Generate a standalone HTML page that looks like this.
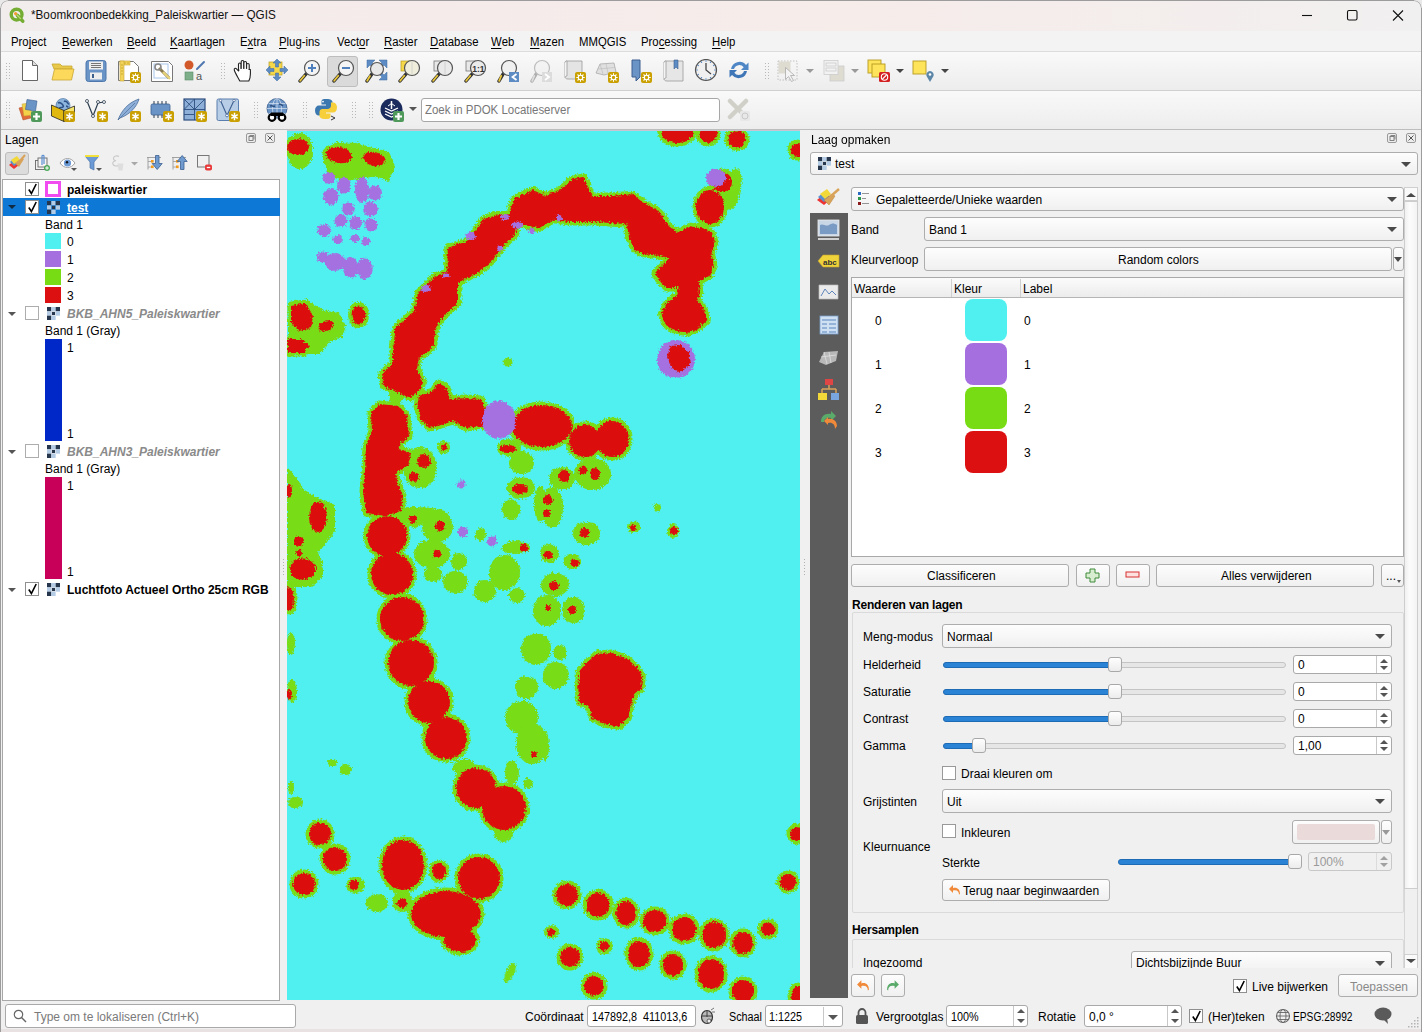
<!DOCTYPE html>
<html><head><meta charset="utf-8">
<style>
*{box-sizing:border-box;margin:0;padding:0}
html,body{width:1422px;height:1032px;overflow:hidden;background:#f0f0f0;font-family:"Liberation Sans",sans-serif;font-size:12px;color:#000}
.a{position:absolute}
.t{position:absolute;white-space:nowrap;line-height:14px;font-size:12px}
u{text-decoration:none;border-bottom:1px solid currentColor;line-height:11px;display:inline-block}
.btn{position:absolute;background:linear-gradient(#fdfdfd,#f0f0f0);border:1px solid #adadad;border-radius:3px}
.cmb{position:absolute;background:linear-gradient(#fdfdfd,#f0f0f0);border:1px solid #adadad;border-radius:3px}
.arr{position:absolute;width:0;height:0;border-left:5px solid transparent;border-right:5px solid transparent;border-top:5px solid #4a4a4a}
.edit{position:absolute;background:#fff;border:1px solid #a9a9a9;border-radius:3px}
.cb{position:absolute;width:14px;height:14px;background:#fff;border:1px solid #8f8f8f}
.chk{position:absolute;left:2px;top:0px;width:9px;height:12px}
.groove{position:absolute;height:6px;border-radius:3px;background:#e6e6e6;border:1px solid #c4c4c4}
.fill{position:absolute;height:6px;border-radius:3px;background:#2b83d6;border:1px solid #1d6bb5}
.hdl{position:absolute;width:14px;height:15px;border-radius:3px;background:linear-gradient(#fefefe,#ececec);border:1px solid #a8a8a8}
.spin{position:absolute;background:#fff;border:1px solid #a9a9a9;border-radius:3px}
.sp{position:absolute;right:0;top:0;width:15px;height:100%;border-left:1px solid #c8c8c8}
.sp:before{content:"";position:absolute;left:3px;top:3px;border-left:4.5px solid transparent;border-right:4.5px solid transparent;border-bottom:4px solid #555}
.sp:after{content:"";position:absolute;left:3px;bottom:3px;border-left:4.5px solid transparent;border-right:4.5px solid transparent;border-top:4px solid #555}
</style></head><body>
<!-- window chrome -->
<div class="a" style="left:0;top:0;width:1422px;height:31px;background:linear-gradient(90deg,#f2eded 0%,#f5ebea 30%,#f6ecea 60%,#f3eeed 85%,#f1f0f0 100%)"></div>
<div class="a" style="left:0;top:31px;width:1422px;height:20px;background:#f3f3f3"></div>
<div class="a" style="left:0;top:51px;width:1422px;height:40px;background:linear-gradient(#f9f9f9,#ededed);border-top:1px solid #dcdcdc;border-bottom:1px solid #d0d0d0"></div>
<div class="a" style="left:0;top:91px;width:1422px;height:39px;background:linear-gradient(#f9f9f9,#ededed);border-bottom:1px solid #bdbdbd"></div>
<!-- title -->
<svg class="a" style="left:9px;top:7px" width="17" height="16" viewBox="0 0 17 16"><circle cx="7.6" cy="7.6" r="5.4" fill="none" stroke="#74ad32" stroke-width="3.4"/><path d="M8.5 8.5l5.2 5.6" stroke="#74ad32" stroke-width="3.6" stroke-linecap="round"/><path d="M7 7l4.5 4.5" stroke="#b8d86a" stroke-width="1.4" stroke-linecap="round"/><circle cx="6.6" cy="6.6" r="1.6" fill="#f39a2e"/></svg>
<div class="t" style="left:31px;top:8px;font-size:12.6px;color:#111;transform:scaleX(0.93);transform-origin:0 0">*Boomkroonbedekking_Paleiskwartier — QGIS</div>
<svg class="a" style="left:1300px;top:9px" width="110" height="14" viewBox="0 0 110 14"><path d="M2 6.5h10" stroke="#111" stroke-width="1.1"/><rect x="47.5" y="1.5" width="9.5" height="9.5" rx="1.5" fill="none" stroke="#111" stroke-width="1.1"/><path d="M93 1.5l10 10M103 1.5l-10 10" stroke="#111" stroke-width="1.1"/></svg>
<!-- menu -->
<div class="t" style="left:11px;top:35px;transform:scaleX(0.945);transform-origin:0 0">Pro<u>j</u>ect</div>
<div class="t" style="left:62px;top:35px;transform:scaleX(0.945);transform-origin:0 0"><u>B</u>ewerken</div>
<div class="t" style="left:127px;top:35px;transform:scaleX(0.945);transform-origin:0 0"><u>B</u>eeld</div>
<div class="t" style="left:170px;top:35px;transform:scaleX(0.945);transform-origin:0 0"><u>K</u>aartlagen</div>
<div class="t" style="left:240px;top:35px;transform:scaleX(0.945);transform-origin:0 0">E<u>x</u>tra</div>
<div class="t" style="left:279px;top:35px;transform:scaleX(0.945);transform-origin:0 0"><u>P</u>lug-ins</div>
<div class="t" style="left:337px;top:35px;transform:scaleX(0.945);transform-origin:0 0">Vect<u>o</u>r</div>
<div class="t" style="left:384px;top:35px;transform:scaleX(0.945);transform-origin:0 0"><u>R</u>aster</div>
<div class="t" style="left:430px;top:35px;transform:scaleX(0.945);transform-origin:0 0"><u>D</u>atabase</div>
<div class="t" style="left:491px;top:35px;transform:scaleX(0.945);transform-origin:0 0"><u>W</u>eb</div>
<div class="t" style="left:530px;top:35px;transform:scaleX(0.945);transform-origin:0 0"><u>M</u>azen</div>
<div class="t" style="left:579px;top:35px;transform:scaleX(0.945);transform-origin:0 0">MMQGIS</div>
<div class="t" style="left:641px;top:35px;transform:scaleX(0.945);transform-origin:0 0">Pro<u>c</u>essing</div>
<div class="t" style="left:712px;top:35px;transform:scaleX(0.945);transform-origin:0 0"><u>H</u>elp</div>
<div class="a" style="left:327px;top:56px;width:31px;height:31px;background:#dadada;border:1px solid #bdbdbd;border-radius:3px"></div>
<svg class="a" style="left:18px;top:59px" width="24" height="24" viewBox="0 0 24 24"><path d="M4.5 1.5h10l5 5v15h-15z" fill="#fff" stroke="#666" stroke-width="1"/><path d="M14.5 1.5v5h5" fill="#ddd" stroke="#666" stroke-width="1"/></svg>
<svg class="a" style="left:51px;top:59px" width="24" height="24" viewBox="0 0 24 24"><path d="M1 5h8l2 2h10v3H3z" fill="#e9c94a" stroke="#c8a830" stroke-width="0.8"/><path d="M3.5 10h19.5l-2.5 11H1z" fill="#fcd95a" stroke="#c9a634" stroke-width="0.8"/></svg>
<svg class="a" style="left:84px;top:59px" width="24" height="24" viewBox="0 0 24 24"><rect x="2" y="1.5" width="20" height="21" rx="2.5" fill="#6a93c6" stroke="#4e78ad"/><rect x="5" y="2.5" width="14" height="8" fill="#eee"/><path d="M7 4.5h10M7 6.5h10M7 8.5h10" stroke="#555" stroke-width="0.8"/><rect x="6" y="13.5" width="12" height="7" fill="#eee"/><rect x="8" y="15" width="2" height="4" fill="#3c5f8c"/></svg>
<svg class="a" style="left:117px;top:59px" width="24" height="24" viewBox="0 0 24 24"><path d="M1.5 2.5h15l5 5v14h-20z" fill="#fff" stroke="#777"/><rect x="3" y="2" width="10" height="4" fill="#f3d45a" stroke="#c9a634" stroke-width="0.6"/><rect x="3" y="2" width="4" height="20" fill="#f3d45a" stroke="#c9a634" stroke-width="0.6"/><path d="M4 6h2M4 9h2M4 12h2M4 15h2M8 3v2M11 3v2" stroke="#b08e20" stroke-width="0.6"/><rect x="13" y="13" width="11" height="11" rx="2" fill="#c9a000"/><path d="M18.5 14.3v2M18.5 20.7v2M14.3 18.5h2M20.7 18.5h2M15.5 15.5l1.4 1.4M20.1 20.1l1.4 1.4M21.5 15.5l-1.4 1.4M16.9 20.1l-1.4 1.4" stroke="#fff" stroke-width="1.1"/><circle cx="18.5" cy="18.5" r="2.2" fill="none" stroke="#fff" stroke-width="1.1"/></svg>
<svg class="a" style="left:150px;top:59px" width="24" height="24" viewBox="0 0 24 24"><path d="M1.5 2.5h17l4 4v16h-21z" fill="#fff" stroke="#777"/><rect x="4" y="5" width="14" height="14" fill="none" stroke="#a8c4ea" stroke-width="1"/><path d="M9 9l10 10" stroke="#8a7a50" stroke-width="3"/><path d="M13 13l7 7" stroke="#e6d27a" stroke-width="2.4"/><circle cx="8" cy="8" r="3" fill="none" stroke="#888" stroke-width="1.6"/></svg>
<svg class="a" style="left:183px;top:59px" width="24" height="24" viewBox="0 0 24 24"><circle cx="6" cy="6" r="4.5" fill="#d2592a"/><path d="M14 10L21 3" stroke="#4f78b0" stroke-width="2" stroke-linecap="round"/><rect x="2" y="13" width="8" height="8" fill="#7db08a" stroke="#5a8a66" stroke-width="0.6"/><text x="13" y="21" font-family="Liberation Sans" font-size="11" fill="#555">a</text></svg>
<div class="a" style="left:220px;top:62px;width:5px;height:18px;background-image:radial-gradient(circle,#b8b8b8 0.8px,transparent 1px);background-size:3px 3px"></div>
<svg class="a" style="left:233px;top:59px" width="24" height="24" viewBox="0 0 24 24"><g fill="#fff" stroke="#222" stroke-width="1.1"><rect x="5.5" y="4" width="2.6" height="11" rx="1.3"/><rect x="8.2" y="1.5" width="2.6" height="12" rx="1.3"/><rect x="10.9" y="2.5" width="2.6" height="12" rx="1.3"/><rect x="13.6" y="4.5" width="2.6" height="11" rx="1.3"/></g><path d="M5.5 12l-2-2.2c-1-1-2.6-.3-2.2 1.2c.8 3 3.5 7 5.5 11h9c1-2 1.6-4 1.6-7V10.5h-11z" fill="#fff" stroke="#222" stroke-width="1.1" stroke-linejoin="round"/><path d="M6.2 10.6h9.3" stroke="#fff" stroke-width="1.4"/></svg>
<svg class="a" style="left:266px;top:59px" width="24" height="24" viewBox="0 0 24 24"><rect x="3" y="3" width="13" height="13" fill="#f5d94a" stroke="#b59a20" stroke-width="0.7"/><path d="M11 0l4 4h-2.5v4h-3V4H7z M11 22l4-4h-2.5v-4h-3v4H7z M0 11l4-4v2.5h4v3H4V15z M22 11l-4-4v2.5h-4v3h4V15z" fill="#5d8cc4" stroke="#3d6aa0" stroke-width="0.5"/></svg>
<svg class="a" style="left:297px;top:59px" width="24" height="24" viewBox="0 0 24 24"><path d="M9.25 14.75 L3 22" stroke="#333" stroke-width="3.4" stroke-linecap="round"/><path d="M7.25 16.75 L3.2 21.8" stroke="#e8c63a" stroke-width="1.8" stroke-linecap="round"/><circle cx="15" cy="9" r="7.5" fill="#f4f4f4" stroke="#555" stroke-width="1.2"/><path d="M15 5v8M11 9h8" stroke="#4f80bc" stroke-width="2"/></svg>
<svg class="a" style="left:331px;top:59px" width="24" height="24" viewBox="0 0 24 24"><path d="M9.25 14.75 L3 22" stroke="#333" stroke-width="3.4" stroke-linecap="round"/><path d="M7.25 16.75 L3.2 21.8" stroke="#e8c63a" stroke-width="1.8" stroke-linecap="round"/><circle cx="15" cy="9" r="7.5" fill="#f4f4f4" stroke="#555" stroke-width="1.2"/><path d="M11 9h8" stroke="#4f80bc" stroke-width="2"/></svg>
<svg class="a" style="left:364px;top:59px" width="24" height="24" viewBox="0 0 24 24"><path d="M3 1h8l-3 3 3 3-2 2-3-3-3 3z M23 1h-8l3 3-3 3 2 2 3-3 3 3z M23 21h-8l3-3-3-3 2-2 3 3 3-3z" fill="#5d8cc4" stroke="#3d6aa0" stroke-width="0.5"/><path d="M7.949999999999999 15.05 L3 22" stroke="#333" stroke-width="3.4" stroke-linecap="round"/><path d="M5.949999999999999 17.05 L3.2 21.8" stroke="#e8c63a" stroke-width="1.8" stroke-linecap="round"/><circle cx="13" cy="10" r="6.5" fill="#e8e8e8" stroke="#555" stroke-width="1.2"/></svg>
<svg class="a" style="left:397px;top:59px" width="24" height="24" viewBox="0 0 24 24"><rect x="4" y="2" width="10" height="10" fill="#f5d94a" stroke="#b59a20" stroke-width="0.7"/><path d="M9.25 14.75 L3 22" stroke="#333" stroke-width="3.4" stroke-linecap="round"/><path d="M7.25 16.75 L3.2 21.8" stroke="#e8c63a" stroke-width="1.8" stroke-linecap="round"/><circle cx="15" cy="9" r="7.5" fill="#efeedd" stroke="#555" stroke-width="1.2"/><path d="M15 2v14" stroke="#ccc" stroke-width="0.8"/></svg>
<svg class="a" style="left:430px;top:59px" width="24" height="24" viewBox="0 0 24 24"><rect x="4" y="2" width="10" height="10" fill="#e8e8e8" stroke="#777" stroke-width="0.8"/><path d="M9.25 14.75 L3 22" stroke="#333" stroke-width="3.4" stroke-linecap="round"/><path d="M7.25 16.75 L3.2 21.8" stroke="#e8c63a" stroke-width="1.8" stroke-linecap="round"/><circle cx="15" cy="9" r="7.5" fill="#eaeaea" stroke="#555" stroke-width="1.2"/><path d="M15 2v14" stroke="#ccc" stroke-width="0.8"/></svg>
<svg class="a" style="left:463px;top:59px" width="24" height="24" viewBox="0 0 24 24"><rect x="3" y="2" width="10" height="10" fill="#e8e8e8" stroke="#777" stroke-width="0.8"/><path d="M9.25 14.75 L3 22" stroke="#333" stroke-width="3.4" stroke-linecap="round"/><path d="M7.25 16.75 L3.2 21.8" stroke="#e8c63a" stroke-width="1.8" stroke-linecap="round"/><circle cx="15" cy="9" r="7.5" fill="#eaeaea" stroke="#555" stroke-width="1.2"/><text x="9.2" y="12.5" font-family="Liberation Sans" font-size="8.5" font-weight="700" fill="#333">1:1</text></svg>
<svg class="a" style="left:496px;top:59px" width="24" height="24" viewBox="0 0 24 24"><path d="M7.25 14.75 L3 22" stroke="#333" stroke-width="3.4" stroke-linecap="round"/><path d="M5.25 16.75 L3.2 21.8" stroke="#e8c63a" stroke-width="1.8" stroke-linecap="round"/><circle cx="13" cy="9" r="7.5" fill="#f0f0f0" stroke="#555" stroke-width="1.2"/><rect x="13" y="13" width="10" height="10" fill="#5d8cc4"/><path d="M20.5 15l-4 3 4 3" stroke="#fff" stroke-width="1.8" fill="none"/></svg>
<svg class="a" style="left:529px;top:59px" width="24" height="24" viewBox="0 0 24 24"><g opacity="0.35"><path d="M7.25 14.75 L3 22" stroke="#333" stroke-width="3.4" stroke-linecap="round"/><path d="M5.25 16.75 L3.2 21.8" stroke="#bbb" stroke-width="1.8" stroke-linecap="round"/><circle cx="13" cy="9" r="7.5" fill="#f0f0f0" stroke="#555" stroke-width="1.2"/></g><rect x="13" y="13" width="10" height="10" fill="#dcdcdc"/><path d="M16 15l4 3-4 3" stroke="#fff" stroke-width="1.8" fill="none"/></svg>
<svg class="a" style="left:562px;top:59px" width="24" height="24" viewBox="0 0 24 24"><path d="M4 2h16v18H6c-2 0-3-1-3-2.5V3.5z" fill="#e4e4e4" stroke="#999" stroke-width="0.8"/><path d="M3 3.5c0-1 1-1.5 2-1.5v15c-1 0-2 .5-2 1.5" fill="#f4f4f4" stroke="#999" stroke-width="0.8"/><rect x="13" y="13" width="11" height="11" rx="2" fill="#c9a000"/><path d="M18.5 14.3v2M18.5 20.7v2M14.3 18.5h2M20.7 18.5h2M15.5 15.5l1.4 1.4M20.1 20.1l1.4 1.4M21.5 15.5l-1.4 1.4M16.9 20.1l-1.4 1.4" stroke="#fff" stroke-width="1.1"/><circle cx="18.5" cy="18.5" r="2.2" fill="none" stroke="#fff" stroke-width="1.1"/></svg>
<svg class="a" style="left:595px;top:59px" width="24" height="24" viewBox="0 0 24 24"><path d="M1 14l4-9 14-1 2 9-12 3z" fill="#e0e0e0" stroke="#aaa" stroke-width="0.8"/><path d="M5 5l3 10M11 4.5l2 10M3 10l17-1.5" stroke="#bbb" stroke-width="0.6"/><rect x="13" y="13" width="11" height="11" rx="2" fill="#c9a000"/><path d="M18.5 14.3v2M18.5 20.7v2M14.3 18.5h2M20.7 18.5h2M15.5 15.5l1.4 1.4M20.1 20.1l1.4 1.4M21.5 15.5l-1.4 1.4M16.9 20.1l-1.4 1.4" stroke="#fff" stroke-width="1.1"/><circle cx="18.5" cy="18.5" r="2.2" fill="none" stroke="#fff" stroke-width="1.1"/></svg>
<svg class="a" style="left:628px;top:59px" width="24" height="24" viewBox="0 0 24 24"><path d="M4 1h8v17l-4 4V18H4z" fill="#6a93c6" stroke="#3d5f8f" stroke-width="1"/><rect x="13" y="13" width="11" height="11" rx="2" fill="#c9a000"/><path d="M18.5 14.3v2M18.5 20.7v2M14.3 18.5h2M20.7 18.5h2M15.5 15.5l1.4 1.4M20.1 20.1l1.4 1.4M21.5 15.5l-1.4 1.4M16.9 20.1l-1.4 1.4" stroke="#fff" stroke-width="1.1"/><circle cx="18.5" cy="18.5" r="2.2" fill="none" stroke="#fff" stroke-width="1.1"/></svg>
<svg class="a" style="left:661px;top:59px" width="24" height="24" viewBox="0 0 24 24"><path d="M4 2h18v20H6c-2 0-3-1-3-2.5V3.5z" fill="#e6e6e6" stroke="#999" stroke-width="0.8"/><path d="M3 3.5c0-1 1-1.5 2-1.5v17c-1 0-2 .5-2 1.5" fill="#f4f4f4" stroke="#999" stroke-width="0.8"/><path d="M13 1h4v9l-2-2-2 2z" fill="#5d8cc4" stroke="#3d5f8f" stroke-width="0.6"/></svg>
<svg class="a" style="left:694px;top:59px" width="24" height="24" viewBox="0 0 24 24"><circle cx="12" cy="11" r="10.5" fill="#f0f0f0" stroke="#555" stroke-width="1.2"/><path d="M12 4v7l5 4" stroke="#444" stroke-width="1.3" fill="none"/><circle cx="21.0" cy="11.0" r="0.7" fill="#4f80bc"/><circle cx="19.8" cy="15.5" r="0.7" fill="#4f80bc"/><circle cx="16.5" cy="18.8" r="0.7" fill="#4f80bc"/><circle cx="12.0" cy="20.0" r="0.7" fill="#4f80bc"/><circle cx="7.5" cy="18.8" r="0.7" fill="#4f80bc"/><circle cx="4.2" cy="15.5" r="0.7" fill="#4f80bc"/><circle cx="3.0" cy="11.0" r="0.7" fill="#4f80bc"/><circle cx="4.2" cy="6.5" r="0.7" fill="#4f80bc"/><circle cx="7.5" cy="3.2" r="0.7" fill="#4f80bc"/><circle cx="12.0" cy="2.0" r="0.7" fill="#4f80bc"/><circle cx="16.5" cy="3.2" r="0.7" fill="#4f80bc"/><circle cx="19.8" cy="6.5" r="0.7" fill="#4f80bc"/></svg>
<svg class="a" style="left:727px;top:59px" width="24" height="24" viewBox="0 0 24 24"><path d="M4 10a8.5 8.5 0 0 1 15-4l2.5-2.5V11h-7.5l2.7-2.7A5.5 5.5 0 0 0 7 10z" fill="#4f86c6"/><path d="M20 12a8.5 8.5 0 0 1-15 4l-2.5 2.5V11h7.5l-2.7 2.7A5.5 5.5 0 0 0 17 12z" fill="#3f76b8"/></svg>
<div class="a" style="left:764px;top:62px;width:5px;height:18px;background-image:radial-gradient(circle,#b8b8b8 0.8px,transparent 1px);background-size:3px 3px"></div>
<svg class="a" style="left:776px;top:59px" width="24" height="24" viewBox="0 0 24 24"><rect x="2" y="2" width="19" height="19" fill="none" stroke="#bbb" stroke-width="0.9" stroke-dasharray="1.5 1.5"/><rect x="2.5" y="2.5" width="12" height="12" fill="#dedbd0"/><path d="M9.5 8.5l0 12 3-3 3 5 2-1-3-5 4 0z" fill="#f4f4f4" stroke="#aaa" stroke-width="0.8"/></svg>
<div class="a" style="left:806px;top:69px;width:0;height:0;border-left:4px solid transparent;border-right:4px solid transparent;border-top:4px solid #999"></div>
<svg class="a" style="left:822px;top:59px" width="24" height="24" viewBox="0 0 24 24"><rect x="8" y="7" width="14" height="15" fill="#dedbd0" stroke="#ccc" stroke-width="0.8"/><rect x="2" y="1.5" width="14" height="14" fill="#f2f2f2" stroke="#ccc" stroke-width="0.8"/><rect x="4" y="4" width="10" height="3" fill="none" stroke="#ccc" stroke-width="0.8"/><rect x="4" y="9" width="10" height="3" fill="none" stroke="#ccc" stroke-width="0.8"/></svg>
<div class="a" style="left:851px;top:69px;width:0;height:0;border-left:4px solid transparent;border-right:4px solid transparent;border-top:4px solid #999"></div>
<svg class="a" style="left:867px;top:59px" width="24" height="24" viewBox="0 0 24 24"><rect x="1" y="1" width="13" height="13" fill="#fde45a" stroke="#b59a20" stroke-width="0.9"/><rect x="5" y="5" width="13" height="13" fill="#fde45a" stroke="#b59a20" stroke-width="0.9"/><rect x="12" y="13" width="11" height="10" rx="1.5" fill="#d42020"/><circle cx="17.5" cy="18" r="3.2" fill="none" stroke="#fff" stroke-width="1.1"/><path d="M15.5 20l4-4" stroke="#fff" stroke-width="1.1"/></svg>
<div class="a" style="left:896px;top:69px;width:0;height:0;border-left:4px solid transparent;border-right:4px solid transparent;border-top:4px solid #444"></div>
<svg class="a" style="left:912px;top:59px" width="24" height="24" viewBox="0 0 24 24"><rect x="1" y="2" width="13" height="13" fill="#fde45a" stroke="#b59a20" stroke-width="0.9"/><path d="M18 23l-3.5-6a3.7 3.7 0 1 1 7 0z" fill="#5b86a8"/><circle cx="18" cy="15.5" r="1.3" fill="#fff"/></svg>
<div class="a" style="left:941px;top:69px;width:0;height:0;border-left:4px solid transparent;border-right:4px solid transparent;border-top:4px solid #444"></div>
<div class="a" style="left:5px;top:101px;width:5px;height:18px;background-image:radial-gradient(circle,#b8b8b8 0.8px,transparent 1px);background-size:3px 3px"></div>
<div class="a" style="left:5px;top:62px;width:5px;height:18px;background-image:radial-gradient(circle,#b8b8b8 0.8px,transparent 1px);background-size:3px 3px"></div>
<svg class="a" style="left:18px;top:98px" width="24" height="24" viewBox="0 0 24 24"><path d="M1 10l8-2 4 12-8 2z" fill="#e06a3a" stroke="#b04a20" stroke-width="0.5"/><path d="M4 6l8-1 2 12-8 1z" fill="#f3d24a" stroke="#c9a634" stroke-width="0.5"/><path d="M9 1.5l10 1.5-1.5 10-10-1.5z" fill="#6a93c6" stroke="#3d5f8f" stroke-width="0.6"/><rect x="13" y="13" width="11" height="11" rx="2" fill="#4f9a5a"/><path d="M18.5 15v7M15 18.5h7" stroke="#fff" stroke-width="2.2"/></svg>
<svg class="a" style="left:51px;top:98px" width="24" height="24" viewBox="0 0 24 24"><circle cx="12" cy="7.5" r="7" fill="#8db4dc" stroke="#3d6a9c" stroke-width="0.6"/><path d="M7 5c1.5-1 3 0 4 1s2 2 1 3-3 0-3.5 1M13 3c1 .5 2 0 3 1s1 2 2 2M15 8c1 0 1.5 1 2.5 1" stroke="#2d5288" stroke-width="1.6" fill="none"/><path d="M0.5 7l12.5 5.5v11L0.5 18z" fill="#e0b810" stroke="#222" stroke-width="0.8"/><path d="M13 12.5l10.5-4.5v11L13 23.5z" fill="#f6e46a" stroke="#222" stroke-width="0.8"/><rect x="13" y="13" width="11" height="11" rx="2" fill="#c9a000"/><path d="M18.5 14.8v7.4M15.3 16.6l6.4 3.8M21.7 16.6l-6.4 3.8" stroke="#fff" stroke-width="1.5"/></svg>
<svg class="a" style="left:84px;top:98px" width="24" height="24" viewBox="0 0 24 24"><path d="M3 3l6 15 5-13 6-1" stroke="#2d3e50" stroke-width="1.2" fill="none"/><circle cx="3" cy="3" r="1.5" fill="#fff" stroke="#2d3e50" stroke-width="0.8"/><circle cx="9" cy="18" r="1.5" fill="#fff" stroke="#2d3e50" stroke-width="0.8"/><circle cx="14" cy="4" r="1.5" fill="#fff" stroke="#2d3e50" stroke-width="0.8"/><circle cx="20" cy="4" r="1.5" fill="#fff" stroke="#2d3e50" stroke-width="0.8"/><rect x="13" y="13" width="11" height="11" rx="2" fill="#c9a000"/><path d="M18.5 14.8v7.4M15.3 16.6l6.4 3.8M21.7 16.6l-6.4 3.8" stroke="#fff" stroke-width="1.5"/></svg>
<svg class="a" style="left:117px;top:98px" width="24" height="24" viewBox="0 0 24 24"><path d="M1 22C4 14 10 5 22 1C20 8 14 16 3 20z" fill="#8eb0d8" stroke="#4a6e9c" stroke-width="0.8"/><path d="M1 22L18 5" stroke="#4a6e9c" stroke-width="0.7"/><rect x="13" y="13" width="11" height="11" rx="2" fill="#c9a000"/><path d="M18.5 14.8v7.4M15.3 16.6l6.4 3.8M21.7 16.6l-6.4 3.8" stroke="#fff" stroke-width="1.5"/></svg>
<svg class="a" style="left:150px;top:98px" width="24" height="24" viewBox="0 0 24 24"><rect x="1" y="6" width="19" height="11" rx="1.5" fill="#6a93c6" stroke="#3d5f8f" stroke-width="0.8"/><path d="M4 3v3M8 3v3M12 3v3M16 3v3M4 17v3M8 17v3M12 17v3M16 17v3" stroke="#2d3e50" stroke-width="1"/><rect x="13" y="13" width="11" height="11" rx="2" fill="#c9a000"/><path d="M18.5 14.8v7.4M15.3 16.6l6.4 3.8M21.7 16.6l-6.4 3.8" stroke="#fff" stroke-width="1.5"/></svg>
<svg class="a" style="left:183px;top:98px" width="24" height="24" viewBox="0 0 24 24"><rect x="1" y="1" width="21" height="21" fill="#8eb0d8" stroke="#2d4f80" stroke-width="1.2"/><path d="M11.5 1v21M1 11.5h21M1 16.5h10M1 1l10.5 10.5M11.5 1L1 11.5M22 1L11.5 11.5" stroke="#2d4f80" stroke-width="0.9"/><rect x="13" y="13" width="11" height="11" rx="2" fill="#c9a000"/><path d="M18.5 14.8v7.4M15.3 16.6l6.4 3.8M21.7 16.6l-6.4 3.8" stroke="#fff" stroke-width="1.5"/></svg>
<svg class="a" style="left:216px;top:98px" width="24" height="24" viewBox="0 0 24 24"><rect x="1" y="1" width="21.5" height="21.5" rx="1.5" fill="#b8cde6" stroke="#5a7fae" stroke-width="1"/><path d="M4.5 2.5l6.5 15 7-15" stroke="#3d5f8f" stroke-width="1.1" fill="none"/><circle cx="11" cy="17.5" r="1.4" fill="#fff" stroke="#3d5f8f" stroke-width="0.8"/><circle cx="4.5" cy="2.5" r="1.2" fill="#fff" stroke="#3d5f8f" stroke-width="0.7"/><circle cx="18" cy="2.5" r="1.2" fill="#fff" stroke="#3d5f8f" stroke-width="0.7"/><rect x="13" y="13" width="11" height="11" rx="2" fill="#c9a000"/><path d="M18.5 14.8v7.4M15.3 16.6l6.4 3.8M21.7 16.6l-6.4 3.8" stroke="#fff" stroke-width="1.5"/></svg>
<div class="a" style="left:253px;top:101px;width:5px;height:18px;background-image:radial-gradient(circle,#b8b8b8 0.8px,transparent 1px);background-size:3px 3px"></div>
<svg class="a" style="left:265px;top:98px" width="24" height="24" viewBox="0 0 24 24"><circle cx="12" cy="10.5" r="10" fill="#6a93c6" stroke="#34598a" stroke-width="0.8"/><ellipse cx="12" cy="10.5" rx="4.5" ry="10" fill="none" stroke="#dce6f2" stroke-width="0.7"/><path d="M2 10.5h20M12 0.5v20M3.5 5.5h17M3.5 15.5h17" stroke="#dce6f2" stroke-width="0.7"/><path d="M5 8c2-1 3 1 5 0M14 6c2 0 3 1 4 2" stroke="#2d4f80" stroke-width="1.4" fill="none"/><circle cx="7" cy="19.5" r="3.3" fill="#fff" stroke="#000" stroke-width="2.2"/><circle cx="17" cy="19.5" r="3.3" fill="#fff" stroke="#000" stroke-width="2.2"/><path d="M6 14.5h12v3.5H6z" fill="#000"/></svg>
<div class="a" style="left:302px;top:101px;width:5px;height:18px;background-image:radial-gradient(circle,#b8b8b8 0.8px,transparent 1px);background-size:3px 3px"></div>
<svg class="a" style="left:314px;top:98px" width="24" height="24" viewBox="0 0 24 24"><path d="M11.5 1c-4 0-4 1.7-4 3v2.5h4.5v1H5c-2.5 0-4 2-4 5s1.5 5 4 5h2v-3c0-2 1.5-3.5 3.5-3.5h5c1.5 0 3-1.2 3-3V4c0-1.5-1.5-3-6-3z" fill="#3c78b0"/><circle cx="9" cy="3.6" r="0.9" fill="#fff"/><path d="M12.5 21c4 0 4-1.7 4-3v-2.5H12v-1h7c2.5 0 4-2 4-5s-1.5-5-4-5h-2v3c0 2-1.5 3.5-3.5 3.5h-5c-1.5 0-3 1.2-3 3V18c0 1.5 1.5 3 6 3z" fill="#f7cf3a"/><path d="M17 18l4 2-4 2" stroke="#333" stroke-width="1" fill="none"/></svg>
<div class="a" style="left:351px;top:101px;width:5px;height:18px;background-image:radial-gradient(circle,#b8b8b8 0.8px,transparent 1px);background-size:3px 3px"></div>
<div class="a" style="left:368px;top:101px;width:5px;height:18px;background-image:radial-gradient(circle,#b8b8b8 0.8px,transparent 1px);background-size:3px 3px"></div>
<svg class="a" style="left:380px;top:98px" width="24" height="24" viewBox="0 0 24 24"><circle cx="11.5" cy="11.5" r="11" fill="#1b2b5e"/><path d="M5 10l6.5 3 6.5-3M5 13l6.5 3 6.5-3M5 16l6.5 3 6.5-3" stroke="#fff" stroke-width="1.3" fill="none"/><path d="M11.5 3v8" stroke="#fff" stroke-width="1.5"/><path d="M8 8l3.5-2.5L15 8" stroke="#fff" stroke-width="1" fill="none"/><rect x="13" y="13" width="11" height="11" rx="2" fill="#4f9a5a"/><path d="M18.5 15v7M15 18.5h7" stroke="#fff" stroke-width="2.2"/></svg>
<div class="a" style="left:409px;top:107px;width:0;height:0;border-left:4px solid transparent;border-right:4px solid transparent;border-top:4px solid #555"></div>
<div class="a" style="left:421px;top:98px;width:299px;height:24px;background:#fff;border:1px solid #a7a7a7;border-radius:3px"></div><div class="t" style="left:425px;top:103px;color:#777;transform:scaleX(0.955);transform-origin:0 0">Zoek in PDOK Locatieserver</div>
<svg class="a" style="left:727px;top:98px" width="24" height="24" viewBox="0 0 24 24"><path d="M3 3l16 16M19 3L3 19" stroke="#d0d0c8" stroke-width="4.5" stroke-linecap="round"/><rect x="13" y="13" width="10" height="10" rx="1.5" fill="#e8e8e8"/><circle cx="18" cy="18" r="3" fill="none" stroke="#c8c8c8" stroke-width="1"/></svg>
<!-- left panel -->
<div class="a" style="left:2px;top:179px;width:278px;height:822px;background:#fff;border:1px solid #a8a8a8"></div>
<div class="t" style="left:5px;top:133px;font-size:12px">Lagen</div>
<svg class="a" style="left:246px;top:133px" width="30" height="11" viewBox="0 0 30 11"><rect x="0.5" y="0.5" width="9" height="9" rx="1.5" fill="#eee" stroke="#9a9a9a"/><rect x="3" y="3.5" width="4" height="4" fill="none" stroke="#777" stroke-width="0.9"/><path d="M3.5 2.5h4.5v4" fill="none" stroke="#777" stroke-width="0.9"/><rect x="19.5" y="0.5" width="9" height="9" rx="1.5" fill="#eee" stroke="#9a9a9a"/><path d="M21.5 2.5l5 5M26.5 2.5l-5 5" stroke="#555" stroke-width="1"/></svg>
<!-- layers toolbar -->
<div class="a" style="left:5px;top:152px;width:24px;height:23px;background:#dcdcdc;border:1px solid #bcbcbc;border-radius:3px"></div>
<svg class="a" style="left:8px;top:154px" width="18" height="18" viewBox="0 0 18 18"><path d="M1 11l6-5 4 5-5 4z" fill="#e33" /><path d="M2 8l6-5 4 5-6 4z" fill="#5b8fd0"/><path d="M3 6l6-4 3 4-6 4z" fill="#f3d83a"/><path d="M7 9l4 4 5-8-2-1z" fill="#d9a35a"/><path d="M11 8l6-7" stroke="#d9a35a" stroke-width="2"/></svg>
<svg class="a" style="left:34px;top:154px" width="18" height="18" viewBox="0 0 18 18"><rect x="1.5" y="6.5" width="9" height="9" fill="none" stroke="#666" stroke-width="0.9"/><rect x="4" y="4" width="9" height="9" fill="#f4f4f4" stroke="#666" stroke-width="0.9"/><path d="M8 11V2c0-1 2-1 2 0v8" stroke="#5b8fd0" stroke-width="1.2" fill="none"/><circle cx="13" cy="14" r="3" fill="#4caa5a"/><path d="M13 12.2v3.6M11.2 14h3.6" stroke="#fff" stroke-width="1"/></svg>
<svg class="a" style="left:59px;top:155px" width="19" height="17" viewBox="0 0 19 17"><path d="M1 8c4-6 11-6 15 0c-4 6-11 6-15 0z" fill="#fff" stroke="#999" stroke-width="0.9"/><circle cx="8.5" cy="8" r="3.6" fill="#6b9ad6"/><circle cx="8" cy="7.3" r="1.2" fill="#111"/><path d="M12 13h6l-3 3z" fill="#555"/></svg>
<svg class="a" style="left:84px;top:154px" width="19" height="18" viewBox="0 0 19 18"><path d="M1 2h14l-5 6v8l-4-2V8z" fill="#6b9ad6" stroke="#4a72a8" stroke-width="0.7"/><rect x="1" y="1" width="14" height="2" fill="#f3e03a"/><path d="M12 14h6l-3 3z" fill="#555"/></svg>
<svg class="a" style="left:110px;top:154px" width="30" height="18" viewBox="0 0 30 18"><path d="M9 2.5c-1.5-1-5-1-5.5 1.5c-.3 1.5 1 2.5 2.5 2.7c-2 .2-3.5 1.3-3.2 3.2c.4 2.5 4.5 2.6 6.2 1.3" fill="none" stroke="#c8c8c8" stroke-width="1.1"/><path d="M7.5 9.5h6l-1 7h-4z" fill="#dedede"/><path d="M21 8h7l-3.5 3.5z" fill="#a8a8a8"/></svg>
<svg class="a" style="left:146px;top:154px" width="18" height="18" viewBox="0 0 18 18"><path d="M1 3.5h14M2 3.5v12" stroke="#999" stroke-width="0.9"/><path d="M2 7.5h3M2 13h3" stroke="#999" stroke-width="0.8"/><rect x="5" y="6" width="2.6" height="2.6" fill="#f39a1a"/><rect x="5" y="11.5" width="2.6" height="2.6" fill="#f39a1a"/><path d="M9.5 1.5h3.5v8h3.2l-5 6-5-6h3.3z" fill="#6e9ad0" stroke="#3d5f8f" stroke-width="0.8" stroke-linejoin="round"/></svg>
<svg class="a" style="left:171px;top:154px" width="18" height="18" viewBox="0 0 18 18"><path d="M1 3.5h14M2 3.5v12" stroke="#999" stroke-width="0.9"/><path d="M2 7.5h3M2 13h3" stroke="#999" stroke-width="0.8"/><rect x="5" y="6" width="2.6" height="2.6" fill="#f39a1a"/><rect x="5" y="11.5" width="2.6" height="2.6" fill="#f39a1a"/><path d="M9.5 15.5h3.5v-8h3.2l-5-6-5 6h3.3z" fill="#6e9ad0" stroke="#3d5f8f" stroke-width="0.8" stroke-linejoin="round"/></svg>
<svg class="a" style="left:196px;top:154px" width="18" height="18" viewBox="0 0 18 18"><rect x="1.5" y="1.5" width="11.5" height="11.5" fill="#f0f0f0" stroke="#777" stroke-width="1"/><rect x="9" y="10.5" width="7" height="6" rx="1.8" fill="#e83a3a"/><path d="M10.8 13.5h3.4" stroke="#fff" stroke-width="1.3"/></svg>
<!-- tree rows -->
<div class="cb" style="left:25px;top:182px"><svg class="chk" viewBox="0 0 9 12"><path d="M0.8 6.5l2.6 4 4.8-9.5" fill="none" stroke="#000" stroke-width="1.6"/></svg></div>
<div class="a" style="left:45px;top:181px;width:16px;height:16px;border:3px solid #f04cf0;background:#fff"></div>
<div class="t" style="left:67px;top:183px;font-weight:700">paleiskwartier</div>
<div class="a" style="left:3px;top:198px;width:277px;height:18px;background:#0d78d6"></div>
<div class="a" style="left:8px;top:205px;width:0;height:0;border-left:4px solid transparent;border-right:4px solid transparent;border-top:4px solid #102a44"></div>
<div class="cb" style="left:25px;top:200px"><svg class="chk" viewBox="0 0 9 12"><path d="M0.8 6.5l2.6 4 4.8-9.5" fill="none" stroke="#000" stroke-width="1.6"/></svg></div>
<svg class="a" style="left:47px;top:201px" width="13" height="13" viewBox="0 0 12 12"><rect width="4" height="4" fill="#26364d"/><rect x="4" width="4" height="4" fill="#b4cce6"/><rect x="8" width="4" height="4" fill="#26364d"/><rect y="4" width="4" height="4" fill="#b4cce6"/><rect x="4.5" y="4.5" width="3" height="3" fill="#26364d"/><rect x="8" y="4" width="4" height="4" fill="#b4cce6"/><rect y="8" width="4" height="4" fill="#26364d"/><rect x="4" y="8" width="4" height="4" fill="#b4cce6"/></svg>
<div class="t" style="left:67px;top:201px;color:#fff;font-weight:700;text-decoration:underline">test</div>
<div class="t" style="left:45px;top:218px">Band 1</div>
<div class="a" style="left:45px;top:233px;width:16px;height:16px;background:#50f0f0"></div><div class="t" style="left:67px;top:235px">0</div>
<div class="a" style="left:45px;top:251px;width:16px;height:16px;background:#a56fe0"></div><div class="t" style="left:67px;top:253px">1</div>
<div class="a" style="left:45px;top:269px;width:16px;height:16px;background:#78dc14"></div><div class="t" style="left:67px;top:271px">2</div>
<div class="a" style="left:45px;top:287px;width:16px;height:16px;background:#dc1010"></div><div class="t" style="left:67px;top:289px">3</div>
<div class="a" style="left:8px;top:312px;width:0;height:0;border-left:4px solid transparent;border-right:4px solid transparent;border-top:4px solid #555"></div>
<div class="cb" style="left:25px;top:306px;border-color:#adadad"></div>
<svg class="a" style="left:47px;top:307px" width="13" height="13" viewBox="0 0 12 12"><rect width="4" height="4" fill="#26364d"/><rect x="4" width="4" height="4" fill="#b4cce6"/><rect x="8" width="4" height="4" fill="#26364d"/><rect y="4" width="4" height="4" fill="#b4cce6"/><rect x="4.5" y="4.5" width="3" height="3" fill="#26364d"/><rect x="8" y="4" width="4" height="4" fill="#b4cce6"/><rect y="8" width="4" height="4" fill="#26364d"/><rect x="4" y="8" width="4" height="4" fill="#b4cce6"/></svg>
<div class="t" style="left:67px;top:307px;font-weight:700;font-style:italic;color:#8a8a8a">BKB_AHN5_Paleiskwartier</div>
<div class="t" style="left:45px;top:324px">Band 1 (Gray)</div>
<div class="a" style="left:45px;top:339px;width:17px;height:102px;background:#0028c8"></div>
<div class="t" style="left:67px;top:341px">1</div><div class="t" style="left:67px;top:427px">1</div>
<div class="a" style="left:8px;top:450px;width:0;height:0;border-left:4px solid transparent;border-right:4px solid transparent;border-top:4px solid #555"></div>
<div class="cb" style="left:25px;top:444px;border-color:#adadad"></div>
<svg class="a" style="left:47px;top:445px" width="13" height="13" viewBox="0 0 12 12"><rect width="4" height="4" fill="#26364d"/><rect x="4" width="4" height="4" fill="#b4cce6"/><rect x="8" width="4" height="4" fill="#26364d"/><rect y="4" width="4" height="4" fill="#b4cce6"/><rect x="4.5" y="4.5" width="3" height="3" fill="#26364d"/><rect x="8" y="4" width="4" height="4" fill="#b4cce6"/><rect y="8" width="4" height="4" fill="#26364d"/><rect x="4" y="8" width="4" height="4" fill="#b4cce6"/></svg>
<div class="t" style="left:67px;top:445px;font-weight:700;font-style:italic;color:#8a8a8a">BKB_AHN3_Paleiskwartier</div>
<div class="t" style="left:45px;top:462px">Band 1 (Gray)</div>
<div class="a" style="left:45px;top:477px;width:17px;height:102px;background:#c8005a"></div>
<div class="t" style="left:67px;top:479px">1</div><div class="t" style="left:67px;top:565px">1</div>
<div class="a" style="left:8px;top:588px;width:0;height:0;border-left:4px solid transparent;border-right:4px solid transparent;border-top:4px solid #555"></div>
<div class="cb" style="left:25px;top:582px"><svg class="chk" viewBox="0 0 9 12"><path d="M0.8 6.5l2.6 4 4.8-9.5" fill="none" stroke="#000" stroke-width="1.6"/></svg></div>
<svg class="a" style="left:47px;top:583px" width="13" height="13" viewBox="0 0 12 12"><rect width="4" height="4" fill="#26364d"/><rect x="4" width="4" height="4" fill="#b4cce6"/><rect x="8" width="4" height="4" fill="#26364d"/><rect y="4" width="4" height="4" fill="#b4cce6"/><rect x="4.5" y="4.5" width="3" height="3" fill="#26364d"/><rect x="8" y="4" width="4" height="4" fill="#b4cce6"/><rect y="8" width="4" height="4" fill="#26364d"/><rect x="4" y="8" width="4" height="4" fill="#b4cce6"/></svg>
<div class="t" style="left:67px;top:583px;font-weight:700">Luchtfoto Actueel Ortho 25cm RGB</div>
<!-- splitter dots -->
<div class="a" style="left:282px;top:558px;width:3px;height:18px;background-image:radial-gradient(circle,#b0b0b0 0.7px,transparent 0.9px);background-size:3px 3px"></div>
<div class="a" style="left:803px;top:558px;width:3px;height:18px;background-image:radial-gradient(circle,#b0b0b0 0.7px,transparent 0.9px);background-size:3px 3px"></div>

<svg class="a" style="left:287px;top:130px" width="513" height="870" viewBox="287 130 513 870">
<defs><filter id="rough" x="-2%" y="-2%" width="104%" height="104%"><feTurbulence type="turbulence" baseFrequency="0.35" numOctaves="2" seed="3"/><feDisplacementMap in="SourceGraphic" scale="4" xChannelSelector="R" yChannelSelector="G"/></filter></defs>
<rect x="287" y="130" width="513" height="870" fill="#50f0f0"/>
<g filter="url(#rough)">
<g fill="#78dc14"><ellipse cx="299" cy="150" rx="13" ry="18"/><path d="M322,148 L335,141 L355,142 L372,147 L388,151 L394,165 L388,181 L375,175 L360,178 L340,180 L327,171 L321,158Z"/><path d="M287,301 L300,299 L312,303 L322,309 L338,312 L345,325 L341,336 L330,340 L319,353 L287,353Z"/><ellipse cx="395.0" cy="395.0" rx="7.0" ry="9.0"/><ellipse cx="419.0" cy="466.5" rx="17.0" ry="20.5"/><ellipse cx="442.5" cy="446.5" rx="6.5" ry="6.5"/><ellipse cx="508.0" cy="447.0" rx="12.0" ry="9.0"/><ellipse cx="520.5" cy="461.5" rx="12.5" ry="11.5"/><ellipse cx="520.0" cy="487.0" rx="14.0" ry="11.0"/><ellipse cx="510.0" cy="508.5" rx="9.0" ry="10.5"/><ellipse cx="539.5" cy="503.0" rx="6.5" ry="18.0"/><ellipse cx="507" cy="361" rx="4.5" ry="4.5"/><path d="M286,466 L295,476 L302,488 L315,496 L334,504 L334,530 L326,541 L317,552 L321,560 L322,575 L311,586 L286,586Z"/><ellipse cx="413.5" cy="517.5" rx="9.5" ry="9.5"/><ellipse cx="436.5" cy="525.5" rx="15.5" ry="15.5"/><ellipse cx="431.0" cy="553.0" rx="18.0" ry="14.0"/><ellipse cx="432.0" cy="573.0" rx="9.0" ry="8.0"/><ellipse cx="458.0" cy="560.5" rx="8.0" ry="8.5"/><ellipse cx="454.5" cy="581.0" rx="12.5" ry="11.0"/><ellipse cx="484.0" cy="590.0" rx="11.0" ry="11.0"/><ellipse cx="503.5" cy="571.5" rx="15.5" ry="17.5"/><ellipse cx="516.0" cy="594.5" rx="8.0" ry="7.5"/><ellipse cx="479.5" cy="533.5" rx="5.5" ry="6.5"/><ellipse cx="515.0" cy="546.5" rx="14.0" ry="6.5"/><ellipse cx="548.5" cy="552.5" rx="9.5" ry="9.5"/><ellipse cx="571.0" cy="560.5" rx="9.0" ry="7.5"/><ellipse cx="561.0" cy="477.5" rx="13.0" ry="11.5"/><ellipse cx="591.5" cy="473.0" rx="18.5" ry="16.0"/><ellipse cx="551.0" cy="506.5" rx="11.0" ry="20.5"/><ellipse cx="585.5" cy="532.5" rx="13.5" ry="11.5"/><ellipse cx="656.5" cy="507.0" rx="3.5" ry="4.0"/><ellipse cx="632.5" cy="526.0" rx="6.5" ry="6.0"/><ellipse cx="672.0" cy="530.0" rx="6.0" ry="7.0"/><ellipse cx="412.0" cy="513.5" rx="36.0" ry="7.5"/><ellipse cx="546.0" cy="609.5" rx="14.0" ry="15.5"/><ellipse cx="572.5" cy="609.0" rx="11.5" ry="13.0"/><ellipse cx="554.0" cy="583.5" rx="14.0" ry="11.5"/><ellipse cx="535.0" cy="648.0" rx="15.0" ry="16.0"/><ellipse cx="559.0" cy="651.5" rx="7.0" ry="7.5"/><ellipse cx="550.5" cy="931.0" rx="7.5" ry="7.0"/><ellipse cx="603.5" cy="945.5" rx="8.5" ry="8.5"/><ellipse cx="525.5" cy="686.5" rx="11.5" ry="11.5"/><ellipse cx="555.0" cy="674.5" rx="13.0" ry="13.5"/><ellipse cx="520.5" cy="716.5" rx="16.5" ry="16.5"/><ellipse cx="531.0" cy="742.5" rx="16.0" ry="20.5"/><ellipse cx="544.0" cy="745.0" rx="4.0" ry="15.0"/><ellipse cx="511.0" cy="771.5" rx="7.0" ry="12.5"/><ellipse cx="527.0" cy="783.0" rx="5.0" ry="5.0"/><ellipse cx="290.0" cy="642.5" rx="4.0" ry="11.5"/><ellipse cx="291.0" cy="690.0" rx="5.0" ry="12.0"/><ellipse cx="331.5" cy="761.5" rx="4.5" ry="3.5"/><ellipse cx="344.5" cy="768.5" rx="6.5" ry="5.5"/><ellipse cx="290.0" cy="786.5" rx="3.0" ry="6.5"/><ellipse cx="294.5" cy="801.5" rx="7.5" ry="5.5"/><ellipse cx="354.5" cy="884.5" rx="9.5" ry="8.5"/><ellipse cx="376.0" cy="902.0" rx="11.0" ry="9.0"/><ellipse cx="401.5" cy="900.5" rx="10.5" ry="10.5"/><ellipse cx="502.5" cy="833.0" rx="9.5" ry="8.0"/><ellipse cx="463.5" cy="766.5" rx="11.5" ry="8.5"/><ellipse cx="509" cy="972" rx="4" ry="11" transform="rotate(25 509 972)"/><ellipse cx="303" cy="570" rx="19" ry="16"/><ellipse cx="732" cy="188" rx="8" ry="21" transform="rotate(10 732 188)"/><ellipse cx="700" cy="206" rx="8" ry="14"/></g>
<g fill="#78dc14" stroke="#78dc14" stroke-width="7" stroke-linejoin="round"><ellipse cx="297" cy="146" rx="11" ry="8"/><ellipse cx="338" cy="154" rx="13" ry="8" transform="rotate(8 338 154)"/><ellipse cx="373" cy="158" rx="11" ry="7" transform="rotate(15 373 158)"/><path d="M290,305 L305,302 L312,315 L310,327 L298,330 L290,322Z"/><path d="M287,338 L300,338 L308,345 L303,352 L287,352Z"/><ellipse cx="325" cy="325" rx="8" ry="5" transform="rotate(-25 325 325)"/><ellipse cx="357.5" cy="314" rx="7" ry="9.5"/><path d="M398,392 L382,385 L381,372 L392,362 L392,350 L394.4,327 L413.6,309.5 L417,292 L434.5,274.6 L446.7,271 L446.7,246.7 L467.6,239.7 L481.6,218.8 L495.5,213.6 L507.7,213.6 L513,198 L532,189 L544,194.4 L555,191 L561,187 L572,178 L582.6,176 L591,195 L610,195 L631.7,193.2 L642.3,201.8 L655.1,208.2 L661.5,214.6 L667.9,225.2 L676.5,231.6 L689.3,225.2 L702,227.3 L710.6,231.6 L713.8,240.1 L710.6,252.9 L712.7,263.6 L709.5,274.3 L697.8,280.7 L698.9,291.3 L696.7,299.8 L702,306.2 L706.3,319 L697.8,327.6 L687.1,331.8 L674.3,329.7 L663.7,323.3 L660.5,312.6 L665.8,302 L676.5,293.4 L677.5,287 L665.8,287 L657.3,278.5 L654.1,272.1 L659.4,265.7 L667.9,257.2 L659.4,255.1 L642.3,252.9 L633.8,248.7 L628.5,238 L625.3,223.1 L593,221 L568,221 L553,218.8 L537.4,227.5 L516.5,222 L514.7,232.8 L502.5,245 L490.3,260.7 L478,271 L457,281.6 L457,302.5 L445,313 L434.5,327 L432.8,344.4 L427.5,350 L418,356 L416,368 L422,380 L420,388 L410,397Z"/><ellipse cx="709" cy="206" rx="14" ry="17"/><ellipse cx="721" cy="181" rx="10" ry="10"/><ellipse cx="676" cy="131" rx="16" ry="11"/><ellipse cx="707" cy="132" rx="9" ry="10"/><ellipse cx="736" cy="138" rx="9" ry="8.5"/><ellipse cx="797" cy="149" rx="7" ry="7"/><path d="M418,395 L432,390 L437,382 L445,386 L450,398 L465,397 L480,398 L485,410 L482,425 L465,427 L452,420 L440,424 L428,427 L420,418 L416,405Z"/><ellipse cx="541" cy="425" rx="30" ry="21"/><ellipse cx="584" cy="440" rx="16" ry="16"/><ellipse cx="611" cy="438" rx="17" ry="18"/><path d="M378,403 L398,405 L406,415 L408,435 L400,442 L398,448 L410,452 L407,465 L395,472 L396,480 L402,495 L400,510 L385,515 L365,512 L362,490 L364,470 L365,445 L371,430 L370,412Z"/><ellipse cx="386" cy="535" rx="20" ry="20"/><ellipse cx="391" cy="573" rx="21" ry="21"/><ellipse cx="401" cy="618" rx="22" ry="22"/><ellipse cx="410" cy="662" rx="23" ry="23"/><ellipse cx="428" cy="701" rx="21" ry="21"/><ellipse cx="445" cy="737" rx="21" ry="21"/><ellipse cx="475" cy="787" rx="20" ry="20"/><ellipse cx="503" cy="807" rx="22" ry="22"/><ellipse cx="302" cy="568" rx="13" ry="10.5"/><ellipse cx="288" cy="598" rx="5" ry="12"/><ellipse cx="319" cy="833" rx="11" ry="11"/><ellipse cx="334" cy="858" rx="12" ry="12"/><ellipse cx="303" cy="883" rx="11" ry="11"/><ellipse cx="402" cy="864" rx="21" ry="25"/><ellipse cx="438" cy="870" rx="7" ry="8"/><ellipse cx="478" cy="877" rx="21" ry="21"/><ellipse cx="459" cy="939" rx="16" ry="12"/><ellipse cx="445" cy="913" rx="35" ry="23"/><path d="M595.4,653 L610.4,652 L625.3,657.3 L636,666 L641.3,674.4 L640.2,687.2 L633.8,693.6 L629.6,704.3 L627.4,717 L618.9,725.6 L604,723.4 L591.2,717 L586.9,704.3 L578.4,702 L577.3,687.2 L578.4,670.1 L585.8,661.6Z"/><ellipse cx="796" cy="833" rx="7" ry="7"/><ellipse cx="787" cy="881" rx="8" ry="8"/><ellipse cx="566" cy="894" rx="11" ry="11"/><ellipse cx="597" cy="904" rx="12" ry="12"/><ellipse cx="625" cy="912" rx="10" ry="12"/><ellipse cx="654" cy="920" rx="12" ry="11"/><ellipse cx="683" cy="928" rx="12" ry="12"/><ellipse cx="713" cy="934" rx="12" ry="13"/><ellipse cx="742" cy="942" rx="10" ry="11"/><ellipse cx="767" cy="928" rx="7" ry="7"/><ellipse cx="569" cy="956" rx="10" ry="10"/><ellipse cx="638" cy="953" rx="11" ry="13"/><ellipse cx="672" cy="964" rx="10" ry="11"/><ellipse cx="710" cy="973" rx="13" ry="15"/><ellipse cx="742" cy="990" rx="11" ry="11"/><ellipse cx="593" cy="985" rx="10" ry="10"/><ellipse cx="798" cy="995" rx="8" ry="10"/></g>
<g fill="#a56fe0"><ellipse cx="675" cy="358" rx="19" ry="19"/></g>
<g fill="#dc1010"><ellipse cx="297" cy="146" rx="11" ry="8"/><ellipse cx="338" cy="154" rx="13" ry="8" transform="rotate(8 338 154)"/><ellipse cx="373" cy="158" rx="11" ry="7" transform="rotate(15 373 158)"/><path d="M290,305 L305,302 L312,315 L310,327 L298,330 L290,322Z"/><path d="M287,338 L300,338 L308,345 L303,352 L287,352Z"/><ellipse cx="325" cy="325" rx="8" ry="5" transform="rotate(-25 325 325)"/><ellipse cx="357.5" cy="314" rx="7" ry="9.5"/><path d="M398,392 L382,385 L381,372 L392,362 L392,350 L394.4,327 L413.6,309.5 L417,292 L434.5,274.6 L446.7,271 L446.7,246.7 L467.6,239.7 L481.6,218.8 L495.5,213.6 L507.7,213.6 L513,198 L532,189 L544,194.4 L555,191 L561,187 L572,178 L582.6,176 L591,195 L610,195 L631.7,193.2 L642.3,201.8 L655.1,208.2 L661.5,214.6 L667.9,225.2 L676.5,231.6 L689.3,225.2 L702,227.3 L710.6,231.6 L713.8,240.1 L710.6,252.9 L712.7,263.6 L709.5,274.3 L697.8,280.7 L698.9,291.3 L696.7,299.8 L702,306.2 L706.3,319 L697.8,327.6 L687.1,331.8 L674.3,329.7 L663.7,323.3 L660.5,312.6 L665.8,302 L676.5,293.4 L677.5,287 L665.8,287 L657.3,278.5 L654.1,272.1 L659.4,265.7 L667.9,257.2 L659.4,255.1 L642.3,252.9 L633.8,248.7 L628.5,238 L625.3,223.1 L593,221 L568,221 L553,218.8 L537.4,227.5 L516.5,222 L514.7,232.8 L502.5,245 L490.3,260.7 L478,271 L457,281.6 L457,302.5 L445,313 L434.5,327 L432.8,344.4 L427.5,350 L418,356 L416,368 L422,380 L420,388 L410,397Z"/><ellipse cx="709" cy="206" rx="14" ry="17"/><ellipse cx="721" cy="181" rx="10" ry="10"/><ellipse cx="676" cy="131" rx="16" ry="11"/><ellipse cx="707" cy="132" rx="9" ry="10"/><ellipse cx="736" cy="138" rx="9" ry="8.5"/><ellipse cx="797" cy="149" rx="7" ry="7"/><path d="M418,395 L432,390 L437,382 L445,386 L450,398 L465,397 L480,398 L485,410 L482,425 L465,427 L452,420 L440,424 L428,427 L420,418 L416,405Z"/><ellipse cx="541" cy="425" rx="30" ry="21"/><ellipse cx="584" cy="440" rx="16" ry="16"/><ellipse cx="611" cy="438" rx="17" ry="18"/><path d="M378,403 L398,405 L406,415 L408,435 L400,442 L398,448 L410,452 L407,465 L395,472 L396,480 L402,495 L400,510 L385,515 L365,512 L362,490 L364,470 L365,445 L371,430 L370,412Z"/><ellipse cx="386" cy="535" rx="20" ry="20"/><ellipse cx="391" cy="573" rx="21" ry="21"/><ellipse cx="401" cy="618" rx="22" ry="22"/><ellipse cx="410" cy="662" rx="23" ry="23"/><ellipse cx="428" cy="701" rx="21" ry="21"/><ellipse cx="445" cy="737" rx="21" ry="21"/><ellipse cx="475" cy="787" rx="20" ry="20"/><ellipse cx="503" cy="807" rx="22" ry="22"/><ellipse cx="302" cy="568" rx="13" ry="10.5"/><ellipse cx="288" cy="598" rx="5" ry="12"/><ellipse cx="319" cy="833" rx="11" ry="11"/><ellipse cx="334" cy="858" rx="12" ry="12"/><ellipse cx="303" cy="883" rx="11" ry="11"/><ellipse cx="402" cy="864" rx="21" ry="25"/><ellipse cx="438" cy="870" rx="7" ry="8"/><ellipse cx="478" cy="877" rx="21" ry="21"/><ellipse cx="459" cy="939" rx="16" ry="12"/><ellipse cx="445" cy="913" rx="35" ry="23"/><path d="M595.4,653 L610.4,652 L625.3,657.3 L636,666 L641.3,674.4 L640.2,687.2 L633.8,693.6 L629.6,704.3 L627.4,717 L618.9,725.6 L604,723.4 L591.2,717 L586.9,704.3 L578.4,702 L577.3,687.2 L578.4,670.1 L585.8,661.6Z"/><ellipse cx="796" cy="833" rx="7" ry="7"/><ellipse cx="787" cy="881" rx="8" ry="8"/><ellipse cx="566" cy="894" rx="11" ry="11"/><ellipse cx="597" cy="904" rx="12" ry="12"/><ellipse cx="625" cy="912" rx="10" ry="12"/><ellipse cx="654" cy="920" rx="12" ry="11"/><ellipse cx="683" cy="928" rx="12" ry="12"/><ellipse cx="713" cy="934" rx="12" ry="13"/><ellipse cx="742" cy="942" rx="10" ry="11"/><ellipse cx="767" cy="928" rx="7" ry="7"/><ellipse cx="569" cy="956" rx="10" ry="10"/><ellipse cx="638" cy="953" rx="11" ry="13"/><ellipse cx="672" cy="964" rx="10" ry="11"/><ellipse cx="710" cy="973" rx="13" ry="15"/><ellipse cx="742" cy="990" rx="11" ry="11"/><ellipse cx="593" cy="985" rx="10" ry="10"/><ellipse cx="798" cy="995" rx="8" ry="10"/><ellipse cx="423" cy="460" rx="7" ry="7"/><ellipse cx="413" cy="476" rx="5" ry="5"/><ellipse cx="443" cy="446" rx="3" ry="3"/><ellipse cx="507" cy="448" rx="8" ry="4"/><ellipse cx="519" cy="488" rx="8" ry="5"/><ellipse cx="317" cy="516" rx="9" ry="15"/><ellipse cx="298" cy="540" rx="5" ry="5"/><ellipse cx="298" cy="552" rx="3" ry="3"/><ellipse cx="288" cy="490" rx="3" ry="7"/><ellipse cx="412" cy="518" rx="4" ry="4"/><ellipse cx="439" cy="525" rx="5" ry="5"/><ellipse cx="436" cy="553" rx="4" ry="4"/><ellipse cx="523" cy="547" rx="4" ry="4"/><ellipse cx="547" cy="554" rx="4" ry="4"/><ellipse cx="574" cy="562" rx="4" ry="4"/><ellipse cx="563" cy="475" rx="6" ry="6"/><ellipse cx="582" cy="469.5" rx="5" ry="4"/><ellipse cx="594" cy="473" rx="5" ry="6"/><ellipse cx="547" cy="499" rx="5" ry="5"/><ellipse cx="546" cy="512" rx="4" ry="4"/><ellipse cx="583.5" cy="532" rx="5" ry="5"/><ellipse cx="632" cy="527" rx="3" ry="3"/><ellipse cx="673" cy="530" rx="4" ry="4"/><ellipse cx="547" cy="607" rx="3" ry="3"/><ellipse cx="571" cy="609" rx="4" ry="4"/><ellipse cx="553" cy="585" rx="5" ry="5"/><ellipse cx="533" cy="753" rx="3" ry="3"/><ellipse cx="288" cy="694" rx="3" ry="5"/><ellipse cx="353" cy="884" rx="5" ry="5"/><ellipse cx="401" cy="902" rx="5" ry="5"/><ellipse cx="550" cy="931" rx="4" ry="4"/><ellipse cx="603" cy="945" rx="5" ry="5"/><path d="M670,345 L680,344 L688,352 L690,362 L684,368 L678,372 L670,366 L666,356Z"/></g>
<g fill="#a56fe0"><ellipse cx="328" cy="177" rx="6" ry="6"/><ellipse cx="343" cy="184.5" rx="7" ry="8"/><ellipse cx="361" cy="189" rx="7" ry="13"/><ellipse cx="374" cy="192" rx="7" ry="7.5"/><ellipse cx="330" cy="195.5" rx="7.5" ry="8.5"/><ellipse cx="347" cy="208" rx="6.5" ry="6.5"/><ellipse cx="369.5" cy="208" rx="7.5" ry="7.5"/><ellipse cx="340" cy="220" rx="6.5" ry="6.5"/><ellipse cx="354.5" cy="222" rx="6.5" ry="6.5"/><ellipse cx="370" cy="224" rx="6.5" ry="6.5"/><ellipse cx="323" cy="229.5" rx="6.5" ry="6.5"/><ellipse cx="336.5" cy="238.5" rx="4.5" ry="4.5"/><ellipse cx="354" cy="237.5" rx="5" ry="3.5"/><ellipse cx="365" cy="240.5" rx="4.5" ry="4.5"/><ellipse cx="322" cy="256" rx="6" ry="5.5"/><ellipse cx="334" cy="261" rx="10" ry="9"/><ellipse cx="349.5" cy="266.5" rx="7.5" ry="10.5"/><ellipse cx="363.7" cy="267.7" rx="8" ry="10.5"/><ellipse cx="498" cy="419" rx="17" ry="19"/><ellipse cx="469.5" cy="235" rx="5.5" ry="4"/><ellipse cx="503.5" cy="216" rx="4.5" ry="3"/><ellipse cx="516" cy="224" rx="6" ry="3.5"/><ellipse cx="530.5" cy="230" rx="3" ry="3"/><ellipse cx="558" cy="217" rx="3" ry="3"/><ellipse cx="425" cy="287.5" rx="4.5" ry="3.5"/><ellipse cx="499" cy="247.5" rx="3" ry="3"/><ellipse cx="445" cy="274.5" rx="3.5" ry="2"/><ellipse cx="460.5" cy="483.5" rx="4" ry="4"/><ellipse cx="462" cy="531" rx="5" ry="5"/><ellipse cx="491" cy="540.5" rx="5" ry="5"/><ellipse cx="715" cy="177" rx="10" ry="9"/></g>
</g><path d="M287 130.5H800" stroke="#c9c4d2" stroke-width="1"/></svg>
<div class="t" style="left:811px;top:133px">Laag opmaken</div>
<svg class="a" style="left:1387px;top:133px" width="30" height="11" viewBox="0 0 30 11"><rect x="0.5" y="0.5" width="9" height="9" rx="1.5" fill="#eee" stroke="#9a9a9a"/><rect x="3" y="3.5" width="4" height="4" fill="none" stroke="#777" stroke-width="0.9"/><path d="M3.5 2.5h4.5v4" fill="none" stroke="#777" stroke-width="0.9"/><rect x="19.5" y="0.5" width="9" height="9" rx="1.5" fill="#eee" stroke="#9a9a9a"/><path d="M21.5 2.5l5 5M26.5 2.5l-5 5" stroke="#555" stroke-width="1"/></svg>
<div class="cmb" style="left:810px;top:152px;width:608px;height:23px"></div>
<svg class="a" style="left:818px;top:157px" width="13" height="13" viewBox="0 0 12 12"><rect width="4" height="4" fill="#26364d"/><rect x="4" width="4" height="4" fill="#b4cce6"/><rect x="8" width="4" height="4" fill="#26364d"/><rect y="4" width="4" height="4" fill="#b4cce6"/><rect x="4.5" y="4.5" width="3" height="3" fill="#26364d"/><rect x="8" y="4" width="4" height="4" fill="#b4cce6"/><rect y="8" width="4" height="4" fill="#26364d"/><rect x="4" y="8" width="4" height="4" fill="#b4cce6"/></svg>
<div class="t" style="left:835px;top:157px">test</div>
<div class="arr" style="left:1401px;top:162px"></div>
<!-- style icon -->
<svg class="a" style="left:816px;top:188px" width="24" height="19" viewBox="0 0 24 19"><path d="M1 12l7-6 6 6-6 5z" fill="#e33"/><path d="M2 9l7-6 5 6-6 5z" fill="#5b8fd0"/><path d="M4 6l7-5 4 5-6 5z" fill="#f3d83a"/><path d="M8 12l5 5 6-9-3-2z" fill="#d9a35a" stroke="#b8823a" stroke-width="0.5"/><path d="M15 8l8-7" stroke="#d9a35a" stroke-width="2.4"/></svg>
<div class="cmb" style="left:851px;top:187px;width:553px;height:24px"></div>
<svg class="a" style="left:858px;top:192px" width="12" height="14" viewBox="0 0 12 14"><rect x="0" y="0" width="3" height="3" fill="#2a6ac0"/><rect x="0" y="5" width="3" height="3" fill="#2a9a4a"/><rect x="0" y="10" width="3" height="3" fill="#8a1a1a"/><path d="M4 1.5h7M4 6.5h4M4 11.5h7" stroke="#888" stroke-width="0.9"/></svg>
<div class="t" style="left:876px;top:193px">Gepaletteerde/Unieke waarden</div>
<div class="arr" style="left:1387px;top:197px"></div>
<!-- scrollbar -->
<div class="a" style="left:1404px;top:187px;width:14px;height:782px;background:#f0f0f0;border:1px solid #d6d6d6"></div>
<div class="a" style="left:1404px;top:187px;width:14px;height:14px;background:#fafafa;border:1px solid #cfcfcf"></div>
<div class="a" style="left:1406px;top:193px;width:0;height:0;border-left:5px solid transparent;border-right:5px solid transparent;border-bottom:4px solid #4a4a4a"></div>
<div class="a" style="left:1404px;top:201px;width:14px;height:688px;background:linear-gradient(90deg,#f0f0f0,#fcfcfc 40%,#f3f3f3);border:1px solid #cdcdcd"></div>
<div class="a" style="left:1404px;top:954px;width:14px;height:15px;background:#fafafa;border:1px solid #cfcfcf"></div>
<div class="a" style="left:1406px;top:959px;width:0;height:0;border-left:5px solid transparent;border-right:5px solid transparent;border-top:4px solid #4a4a4a"></div>
<!-- side bar -->
<div class="a" style="left:810px;top:213px;width:38px;height:785px;background:#5c5c5c"></div>
<svg class="a" style="left:817px;top:219px" width="23" height="215" viewBox="0 0 23 215">
 <rect x="1" y="1" width="21" height="16" fill="#c8d6e6" stroke="#eee" stroke-width="0.8"/><path d="M3 6c3-2 6 2 9 0s5-2 8 0v9H3z" fill="#7a9cc4"/><path d="M1 20h21" stroke="#eee" stroke-width="1.6"/>
 <path d="M1 42l5-6h16v12H6z" fill="#f0d23a" stroke="#c9a634" stroke-width="0.6"/><text x="6" y="46" font-family="Liberation Sans" font-size="8" font-weight="700" fill="#333">abc</text>
 <path d="M2 66h19v14H2z" fill="#eaeaea" stroke="#bbb" stroke-width="0.7"/><path d="M4 77l4-7 4 5 3-3 4 4" stroke="#4f7ab5" stroke-width="0.9" fill="none"/>
 <rect x="3" y="97" width="18" height="18" fill="#cfe0f2" stroke="#7aa0cc" stroke-width="0.8"/><path d="M5 101h14M5 105h5M12 105h7M5 109h5M12 109h7M5 113h5M12 113h7" stroke="#5a86c0" stroke-width="1"/>
 <path d="M2 143l5-10 14-1-2 10-10 4z" fill="#b8b8b8"/><path d="M7 133l3 12M12 133l2 11M4 138l15-2" stroke="#e0e0e0" stroke-width="0.8"/>
 <rect x="8" y="160" width="8" height="6" fill="#e04545"/><path d="M12 166v4M5 170h14M5 170v4M19 170v4" stroke="#d9a35a" stroke-width="1.5" fill="none"/><rect x="1" y="174" width="9" height="7" fill="#f3d83a"/><rect x="14" y="174" width="8" height="7" fill="#7aa6e0"/>
 <path d="M4 203c0-6 4-9 10-8v-3l5 5-5 5v-3c-4-1-7 1-7 4z" fill="#5aaa6a"/><path d="M18 210c0-5-3-7-7-6v2l-4-4 4-4v2c5-1 9 2 9 7z" fill="#f08a3a"/>
</svg>
<!-- form -->
<div class="t" style="left:851px;top:223px">Band</div>
<div class="cmb" style="left:924px;top:217px;width:480px;height:24px"></div>
<div class="t" style="left:929px;top:223px">Band 1</div>
<div class="arr" style="left:1387px;top:227px"></div>
<div class="t" style="left:851px;top:253px">Kleurverloop</div>
<div class="btn" style="left:924px;top:247px;width:468px;height:24px"></div>
<div class="t" style="left:1118px;top:253px">Random colors</div>
<div class="btn" style="left:1393px;top:247px;width:11px;height:24px"></div>
<div class="a" style="left:1394px;top:257px;width:0;height:0;border-left:4.5px solid transparent;border-right:4.5px solid transparent;border-top:5px solid #4a4a4a"></div>
<!-- table -->
<div class="a" style="left:851px;top:277px;width:553px;height:280px;background:#fff;border:1px solid #a9a9a9"></div>
<div class="a" style="left:852px;top:278px;width:551px;height:20px;background:linear-gradient(#fbfbfb,#ececec);border-bottom:1px solid #b5b5b5"></div>
<div class="a" style="left:951px;top:279px;width:1px;height:18px;background:#d0d0d0"></div>
<div class="a" style="left:1020px;top:279px;width:1px;height:18px;background:#d0d0d0"></div>
<div class="t" style="left:854px;top:282px">Waarde</div>
<div class="t" style="left:954px;top:282px">Kleur</div>
<div class="t" style="left:1023px;top:282px">Label</div>
<div class="a" style="left:965px;top:299px;width:42px;height:42px;border-radius:8px;background:#50f0f0"></div>
<div class="a" style="left:965px;top:343px;width:42px;height:42px;border-radius:8px;background:#a56fe0"></div>
<div class="a" style="left:965px;top:387px;width:42px;height:42px;border-radius:8px;background:#78dc14"></div>
<div class="a" style="left:965px;top:431px;width:42px;height:42px;border-radius:8px;background:#dc1010"></div>
<div class="t" style="left:875px;top:314px">0</div><div class="t" style="left:1024px;top:314px">0</div>
<div class="t" style="left:875px;top:358px">1</div><div class="t" style="left:1024px;top:358px">1</div>
<div class="t" style="left:875px;top:402px">2</div><div class="t" style="left:1024px;top:402px">2</div>
<div class="t" style="left:875px;top:446px">3</div><div class="t" style="left:1024px;top:446px">3</div>
<!-- buttons -->
<div class="btn" style="left:851px;top:564px;width:218px;height:23px"></div><div class="t" style="left:927px;top:569px">Classificeren</div>
<div class="btn" style="left:1076px;top:564px;width:34px;height:23px"></div>
<svg class="a" style="left:1085px;top:568px" width="15" height="15" viewBox="0 0 15 15"><path d="M5 1h5v4h4v5h-4v4H5v-4H1V5h4z" fill="#d8ecd0" stroke="#3f8a3a" stroke-width="1"/></svg>
<div class="btn" style="left:1116px;top:564px;width:34px;height:23px"></div>
<svg class="a" style="left:1125px;top:571px" width="15" height="8" viewBox="0 0 15 8"><rect x="1" y="1" width="13" height="5" fill="#fde0e0" stroke="#d83030" stroke-width="1"/></svg>
<div class="btn" style="left:1156px;top:564px;width:218px;height:23px"></div><div class="t" style="left:1221px;top:569px">Alles verwijderen</div>
<div class="btn" style="left:1381px;top:564px;width:23px;height:23px"></div><div class="t" style="left:1386px;top:569px">...</div>
<div class="a" style="left:1397px;top:580px;width:0;height:0;border-left:2.5px solid transparent;border-right:2.5px solid transparent;border-top:3px solid #555"></div>
<div class="t" style="left:852px;top:598px;font-weight:700;letter-spacing:-0.2px">Renderen van lagen</div>
<div class="a" style="left:852px;top:612px;width:552px;height:301px;border:1px solid #dadada;border-radius:2px"></div>
<div class="t" style="left:863px;top:630px">Meng-modus</div>
<div class="cmb" style="left:942px;top:624px;width:450px;height:24px"></div>
<div class="t" style="left:947px;top:630px">Normaal</div>
<div class="arr" style="left:1375px;top:634px"></div>
<!-- sliders -->
<div class="t" style="left:863px;top:658px">Helderheid</div>
<div class="groove" style="left:943px;top:662px;width:343px"></div><div class="fill" style="left:943px;top:662px;width:172px"></div><div class="hdl" style="left:1108px;top:657px"></div>
<div class="spin" style="left:1293px;top:655px;width:99px;height:19px"><div class="sp"></div></div><div class="t" style="left:1298px;top:658px">0</div>
<div class="t" style="left:863px;top:685px">Saturatie</div>
<div class="groove" style="left:943px;top:689px;width:343px"></div><div class="fill" style="left:943px;top:689px;width:172px"></div><div class="hdl" style="left:1108px;top:684px"></div>
<div class="spin" style="left:1293px;top:682px;width:99px;height:19px"><div class="sp"></div></div><div class="t" style="left:1298px;top:685px">0</div>
<div class="t" style="left:863px;top:712px">Contrast</div>
<div class="groove" style="left:943px;top:716px;width:343px"></div><div class="fill" style="left:943px;top:716px;width:172px"></div><div class="hdl" style="left:1108px;top:711px"></div>
<div class="spin" style="left:1293px;top:709px;width:99px;height:19px"><div class="sp"></div></div><div class="t" style="left:1298px;top:712px">0</div>
<div class="t" style="left:863px;top:739px">Gamma</div>
<div class="groove" style="left:943px;top:743px;width:343px"></div><div class="fill" style="left:943px;top:743px;width:36px"></div><div class="hdl" style="left:972px;top:738px"></div>
<div class="spin" style="left:1293px;top:736px;width:99px;height:19px"><div class="sp"></div></div><div class="t" style="left:1298px;top:739px">1,00</div>
<div class="cb" style="left:942px;top:766px;border-color:#999"></div><div class="t" style="left:961px;top:767px">Draai kleuren om</div>
<div class="t" style="left:863px;top:795px">Grijstinten</div>
<div class="cmb" style="left:942px;top:789px;width:450px;height:24px"></div>
<div class="t" style="left:947px;top:795px">Uit</div>
<div class="arr" style="left:1375px;top:799px"></div>
<div class="cb" style="left:942px;top:824px;border-color:#999"></div><div class="t" style="left:961px;top:826px">Inkleuren</div>
<div class="btn" style="left:1292px;top:820px;width:88px;height:24px"></div><div class="a" style="left:1297px;top:824px;width:78px;height:16px;background:#eadada;border-radius:2px"></div>
<div class="btn" style="left:1381px;top:820px;width:11px;height:24px"></div>
<div class="a" style="left:1382px;top:830px;width:0;height:0;border-left:4.5px solid transparent;border-right:4.5px solid transparent;border-top:5px solid #999"></div>
<div class="t" style="left:863px;top:840px">Kleurnuance</div>
<div class="t" style="left:942px;top:856px">Sterkte</div>
<div class="groove" style="left:1118px;top:859px;width:176px"></div><div class="fill" style="left:1118px;top:859px;width:176px"></div><div class="hdl" style="left:1288px;top:854px"></div>
<div class="spin" style="left:1308px;top:852px;width:84px;height:19px;border-color:#c8c8c8;background:#f0f0f0"><div class="sp" style="opacity:.5"></div></div><div class="t" style="left:1313px;top:855px;color:#9a9a9a">100%</div>
<div class="btn" style="left:942px;top:879px;width:168px;height:22px"></div>
<svg class="a" style="left:948px;top:883px" width="13" height="13" viewBox="0 0 13 13"><path d="M12 11c0-5-3-7-7-6V2L1 6l4 4V7.5c4-1 6 1 6 4z" fill="#f08a3a"/></svg>
<div class="t" style="left:963px;top:884px">Terug naar beginwaarden</div>
<div class="t" style="left:852px;top:923px;font-weight:700;letter-spacing:-0.2px">Hersamplen</div>
<div class="a" style="left:852px;top:939px;width:552px;height:40px;border:1px solid #dadada;border-radius:2px"></div>
<div class="t" style="left:863px;top:956px">Ingezoomd</div>
<div class="cmb" style="left:1131px;top:951px;width:261px;height:24px"></div>
<div class="t" style="left:1136px;top:956px">Dichtsbijzijnde Buur</div>
<div class="arr" style="left:1375px;top:961px"></div>
<div class="a" style="left:849px;top:968px;width:572px;height:32px;background:#f0f0f0"></div>
<!-- bottom buttons -->
<div class="btn" style="left:851px;top:974px;width:24px;height:23px"></div>
<svg class="a" style="left:856px;top:978px" width="14" height="14" viewBox="0 0 13 13"><path d="M12 11c0-5-3-7-7-6V2L1 6l4 4V7.5c4-1 6 1 6 4z" fill="#f08a3a"/></svg>
<div class="btn" style="left:881px;top:974px;width:24px;height:23px"></div>
<svg class="a" style="left:886px;top:978px" width="14" height="14" viewBox="0 0 13 13"><path d="M1 11c0-5 3-7 7-6V2l4 4-4 4V7.5c-4-1-6 1-6 4z" fill="#5aaa6a"/></svg>
<div class="cb" style="left:1233px;top:979px"><svg class="chk" viewBox="0 0 9 12"><path d="M0.8 6.5l2.6 4 4.8-9.5" fill="none" stroke="#000" stroke-width="1.6"/></svg></div>
<div class="t" style="left:1252px;top:980px">Live bijwerken</div>
<div class="btn" style="left:1338px;top:974px;width:80px;height:23px"></div>
<div class="t" style="left:1350px;top:980px;color:#8a8a8a">Toepassen</div>

<div class="edit" style="left:5px;top:1004px;width:291px;height:24px;border-color:#a9a9a9"></div>
<svg class="a" style="left:13px;top:1009px" width="14" height="14" viewBox="0 0 14 14"><circle cx="5.5" cy="5.5" r="4.2" fill="none" stroke="#666" stroke-width="1.2"/><path d="M8.5 8.5l4.5 4.5" stroke="#666" stroke-width="1.4"/></svg>
<div class="t" style="left:34px;top:1010px;color:#7a7a7a">Type om te lokaliseren (Ctrl+K)</div>
<div class="t" style="left:525px;top:1010px">Coördinaat</div>
<div class="edit" style="left:587px;top:1005px;width:109px;height:22px"></div>
<div class="t" style="left:592px;top:1010px;transform:scaleX(0.9);transform-origin:0 0">147892,8&nbsp; 411013,6</div>
<svg class="a" style="left:699px;top:1007px" width="17" height="18" viewBox="0 0 17 18"><ellipse cx="8" cy="10" rx="5.5" ry="6.5" fill="#bbb" stroke="#333" stroke-width="1.2"/><path d="M8 4v6M3 9h10" stroke="#333" stroke-width="0.9"/><circle cx="10" cy="14" r="2" fill="#eee" stroke="#333" stroke-width="0.7"/><path d="M12 3l3-2M13 5l3 0" stroke="#555" stroke-width="0.8"/></svg>
<div class="t" style="left:729px;top:1010px;transform:scaleX(0.9);transform-origin:0 0">Schaal</div>
<div class="edit" style="left:765px;top:1005px;width:78px;height:22px"></div>
<div class="a" style="left:823px;top:1007px;width:1px;height:20px;background:#c8c8c8"></div>
<div class="t" style="left:769px;top:1010px;transform:scaleX(0.9);transform-origin:0 0">1:1225</div>
<div class="a" style="left:828px;top:1015px;width:0;height:0;border-left:5px solid transparent;border-right:5px solid transparent;border-top:5px solid #555"></div>
<svg class="a" style="left:855px;top:1007px" width="14" height="18" viewBox="0 0 14 18"><path d="M3.5 8V5.5a3.5 3.5 0 0 1 7 0V8" fill="none" stroke="#555" stroke-width="1.8"/><rect x="1" y="8" width="12" height="9" rx="1.5" fill="#555"/></svg>
<div class="t" style="left:876px;top:1010px">Vergrootglas</div>
<div class="edit" style="left:946px;top:1005px;width:82px;height:22px"><div class="sp" style="width:14px"></div></div>
<div class="t" style="left:951px;top:1010px;transform:scaleX(0.9);transform-origin:0 0">100%</div>
<div class="t" style="left:1038px;top:1010px">Rotatie</div>
<div class="edit" style="left:1084px;top:1005px;width:98px;height:22px"><div class="sp" style="width:14px"></div></div>
<div class="t" style="left:1089px;top:1010px">0,0 °</div>
<div class="cb" style="left:1189px;top:1009px"><svg class="chk" viewBox="0 0 9 12"><path d="M0.8 6.5l2.6 4 4.8-9.5" fill="none" stroke="#000" stroke-width="1.6"/></svg></div>
<div class="t" style="left:1208px;top:1010px">(Her)teken</div>
<svg class="a" style="left:1275px;top:1008px" width="16" height="16" viewBox="0 0 16 16"><circle cx="8" cy="8" r="6.5" fill="none" stroke="#666" stroke-width="1.1"/><ellipse cx="8" cy="8" rx="3" ry="6.5" fill="none" stroke="#666" stroke-width="0.9"/><path d="M1.5 8h13M3 4.5h10M3 11.5h10" stroke="#666" stroke-width="0.9"/></svg>
<div class="t" style="left:1293px;top:1010px;transform:scaleX(0.85);transform-origin:0 0">EPSG:28992</div>
<svg class="a" style="left:1374px;top:1007px" width="18" height="17" viewBox="0 0 18 17"><ellipse cx="9" cy="7" rx="8.5" ry="6.5" fill="#5a5a5a"/><path d="M9 12l5 5-1-6z" fill="#5a5a5a"/></svg>
<div class="a" style="left:0;top:1029px;width:1422px;height:3px;background:#e8e2e2"></div>
<svg class="a" style="left:1408px;top:1016px" width="12" height="12" viewBox="0 0 12 12"><g fill="#b4b4b4"><rect x="9" y="1" width="1.5" height="1.5"/><rect x="6" y="4" width="1.5" height="1.5"/><rect x="9" y="4" width="1.5" height="1.5"/><rect x="3" y="7" width="1.5" height="1.5"/><rect x="6" y="7" width="1.5" height="1.5"/><rect x="9" y="7" width="1.5" height="1.5"/><rect x="0" y="10" width="1.5" height="1.5"/><rect x="3" y="10" width="1.5" height="1.5"/><rect x="6" y="10" width="1.5" height="1.5"/><rect x="9" y="10" width="1.5" height="1.5"/></g></svg>

<div class="a" style="left:0;top:0;width:1422px;height:1032px;border:1px solid #9c9c9c;border-bottom:none;border-radius:8px 8px 0 0"></div><div class="a" style="left:0;top:0;width:8px;height:8px;background:radial-gradient(circle at 8px 8px,transparent 7px,#e9e9e9 8px)"></div><div class="a" style="left:1414px;top:0;width:8px;height:8px;background:radial-gradient(circle at 0 8px,transparent 7px,#e9e9e9 8px)"></div>

</body></html>
